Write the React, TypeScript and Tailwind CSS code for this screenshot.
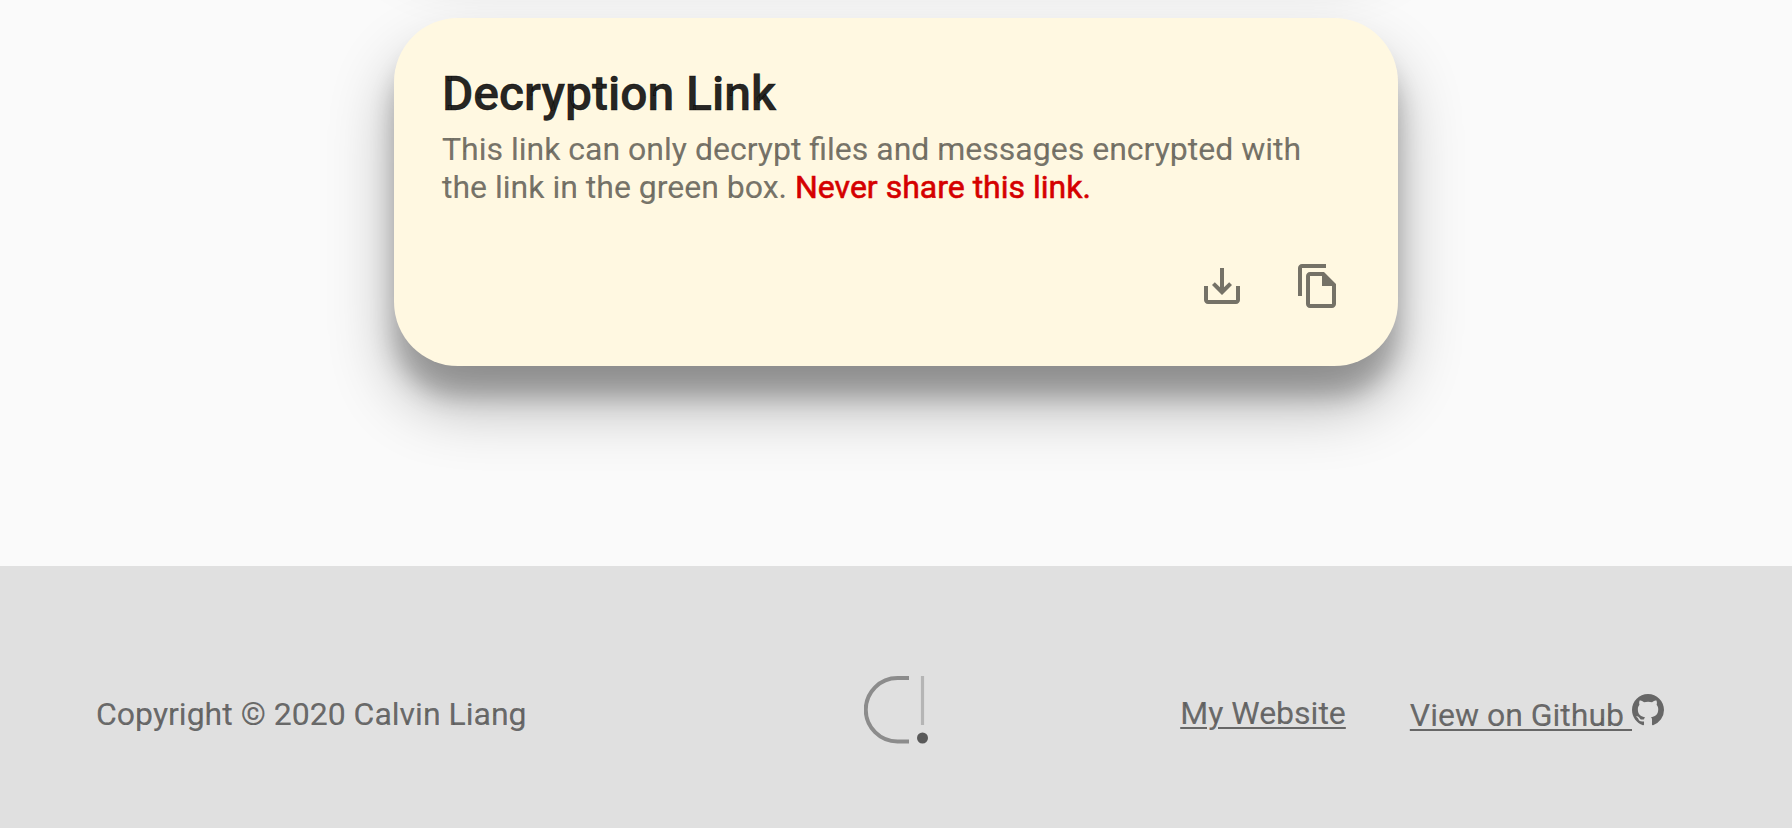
import React from "react";

function SaveIcon() {
  return (
    <svg viewBox="0 0 24 24" className="size-12 fill-current" aria-hidden="true">
      <path d="M19 12v7H5v-7H3v7c0 1.1.9 2 2 2h14c1.1 0 2-.9 2-2v-7h-2zm-6 .67l2.59-2.58L17 11.5l-5 5-5-5 1.41-1.41L11 12.67V3h2z" />
    </svg>
  );
}

function CopyIcon() {
  return (
    <svg viewBox="0 0 24 24" className="size-12 fill-current" aria-hidden="true">
      <path d="M16 1H4c-1.1 0-2 .9-2 2v14h2V3h12V1zm-1 4H8c-1.1 0-1.99.9-1.99 2L6 21c0 1.1.89 2 1.99 2H19c1.1 0 2-.9 2-2V11l-6-6zM8 21V7h6v5h5v9H8z" />
    </svg>
  );
}

function GithubIcon() {
  return (
    <svg viewBox="0 0 16 16" className="-mt-0.5 size-8 fill-current" aria-hidden="true">
      <path fillRule="evenodd" d="M8 0C3.58 0 0 3.58 0 8c0 3.54 2.29 6.53 5.47 7.59.4.07.55-.17.55-.38 0-.19-.01-.82-.01-1.49-2.01.37-2.53-.49-2.69-.94-.09-.23-.48-.94-.82-1.13-.28-.15-.68-.52-.01-.53.63-.01 1.08.58 1.23.82.72 1.21 1.87.87 2.33.66.07-.52.28-.87.51-1.07-1.78-.2-3.64-.89-3.64-3.95 0-.87.31-1.59.82-2.15-.08-.2-.36-1.02.08-2.12 0 0 .67-.21 2.2.82.64-.18 1.32-.27 2-.27s1.36.09 2 .27c1.53-1.04 2.2-.82 2.2-.82.44 1.1.16 1.92.08 2.12.51.56.82 1.27.82 2.15 0 3.07-1.87 3.75-3.65 3.95.29.25.54.73.54 1.48 0 1.07-.01 1.93-.01 2.2 0 .21.15.46.55.38A8.01 8.01 0 0 0 16 8c0-4.42-3.58-8-8-8z" />
    </svg>
  );
}

function Logo() {
  return (
    <svg viewBox="0 0 64 68" className="h-[68px] w-16" fill="none" aria-hidden="true">
      <path d="M45 2H33.5a31.75 31.75 0 0 0 0 63.5H45" stroke="#8c8c8c" strokeWidth="4" />
      <path d="M58.5 0v49" stroke="#b5b5b5" strokeWidth="3.2" />
      <circle cx="58.5" cy="62" r="5.5" fill="#595959" />
    </svg>
  );
}

function LinkCard() {
  return (
    <section className="h-[348px] w-[1004px] shrink-0 rounded-[64px] bg-[#fff8e1] px-12 pt-12 shadow-[0_38px_64px_rgba(0,0,0,0.3),0_30px_24px_rgba(0,0,0,0.22)]">
      <h2 className="text-[48px] leading-[56px] font-medium text-black/87 [-webkit-text-stroke:0.5px]">Decryption Link</h2>
      <p className="mt-2 text-[32px] leading-[38px] text-black/54 [-webkit-text-stroke:0.2px]">
        This link can only decrypt files and messages encrypted with
        <br />
        the link in the green box. <span className="text-[#d50000] [-webkit-text-stroke:0.6px]">Never share this link.</span>
      </p>
      <div className="mt-8 -mr-4 flex justify-end text-black/54">
        <button className="p-6" aria-label="Download"><SaveIcon /></button>
        <button className="p-6" aria-label="Copy"><CopyIcon /></button>
      </div>
    </section>
  );
}

export default function App() {
  return (
    <div className="flex h-[828px] flex-col overflow-hidden bg-[#fafafa] font-[Roboto,sans-serif]">
      <main className="flex h-[566px] shrink-0 flex-col items-center gap-24">
        {/* Bottom edge of the preceding card, scrolled above the viewport */}
        <div className="-mt-[238px] h-40 w-[1004px] shrink-0 rounded-[64px] shadow-[0_38px_64px_rgba(0,0,0,0.3),0_30px_24px_rgba(0,0,0,0.22)]" />
        <LinkCard />
      </main>
      <footer className="grid flex-1 grid-cols-[768px_1fr_auto] bg-[#e0e0e0] pt-[110px] pr-32 pl-24 text-[32px] leading-[38px] text-black/54 [-webkit-text-stroke:0.2px]">
        <p className="pt-[19px]">Copyright © 2020 Calvin Liang</p>
        <Logo />
        <nav className="flex gap-16 pt-[18px]">
          <a href="#" className="underline decoration-2 underline-offset-[3px]">My Website</a>
          <a href="#" className="flex pt-0.5">
            <span className="whitespace-pre underline decoration-2 underline-offset-[3px]">View on Github </span>
            <GithubIcon />
          </a>
        </nav>
      </footer>
    </div>
  );
}
